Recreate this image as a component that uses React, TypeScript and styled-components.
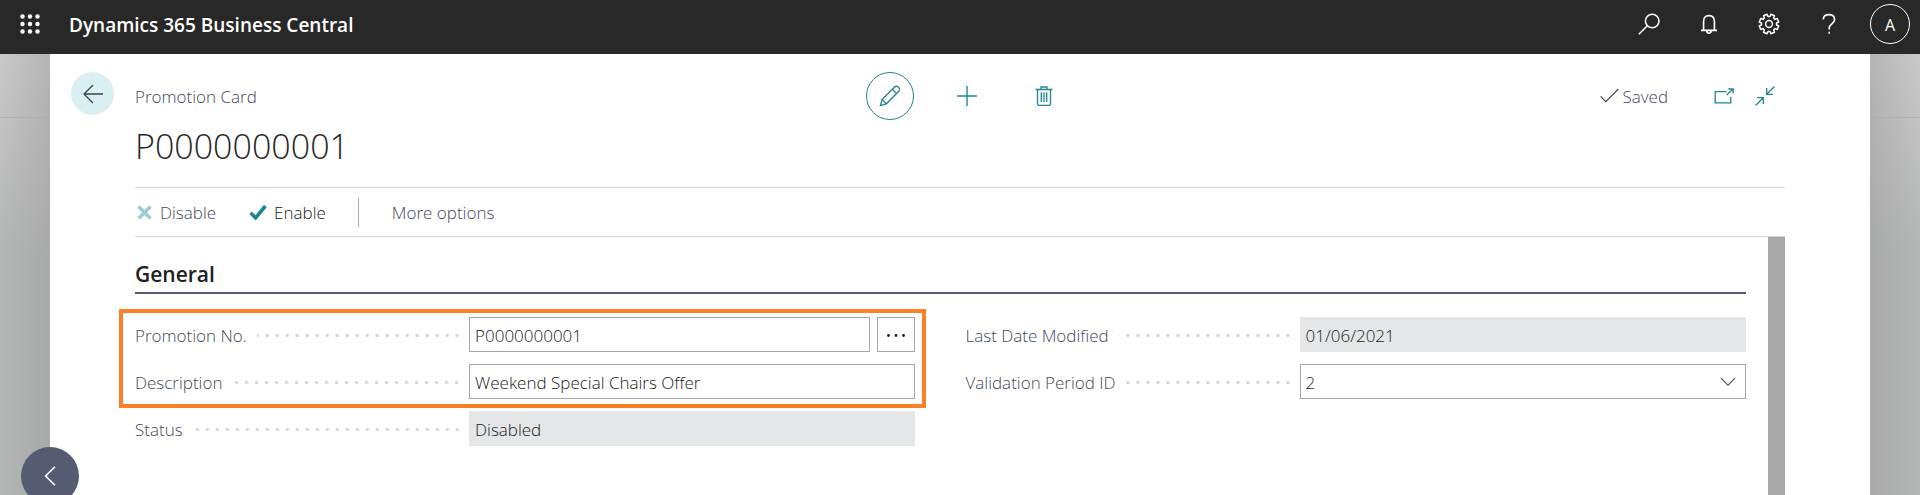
import React from "react";
import styled, { createGlobalStyle } from "styled-components";

const teal = "#1f868d";
const slate = "#535c70";
const ink = "#1a1a1a";
const mutedInk = "#3f4860";

const GlobalStyle = createGlobalStyle`
  *, *::before, *::after { box-sizing: border-box; }
  body { margin: 0; }
  body, button, input, select {
    font-family: "Open Sans", "Noto Sans", sans-serif;
    font-size: 17px;
    font-weight: 300;
  }
  h1, h2, p { margin: 0; }
`;

const Page = styled.div`
  display: flex;
  flex-direction: column;
  min-height: 100vh;
  overflow: hidden;
`;

const TopBar = styled.header`
  display: flex;
  align-items: center;
  height: 54px;
  padding: 0 10px 6px 14px;
  background: #282828;
  color: #fff;
`;

const IconButton = styled.button<{ $size?: number; $tone?: string }>`
  display: flex;
  flex: none;
  align-items: center;
  justify-content: center;
  width: ${(p) => p.$size ?? 48}px;
  height: ${(p) => p.$size ?? 48}px;
  padding: 0;
  border: 0;
  background: none;
  color: ${(p) => p.$tone ?? teal};
  cursor: pointer;
`;

const ProductName = styled.a`
  margin-left: 23px;
  padding-top: 2px;
  color: #fff;
  font-size: 19px;
  font-weight: 600;
  line-height: 26px;
  text-decoration: none;
`;

const TopActions = styled.nav`
  display: flex;
  align-items: center;
  gap: 28px;
  margin: 0 25px 0 auto;
`;

const Avatar = styled.button`
  width: 40px;
  height: 40px;
  padding: 2px 0 0;
  border: 1px solid #fff;
  border-radius: 50%;
  background: none;
  color: #fff;
  font-size: 16px;
  font-weight: 400;
`;

const Backdrop = styled.div`
  display: flex;
  flex: 1;
  padding: 0 50px;
  background:
    linear-gradient(#b0b0b0, #b0b0b0) 0 63px / 100% 1px no-repeat,
    linear-gradient(90deg, transparent, rgba(150, 150, 150, 0.4) 50px, rgba(150, 150, 150, 0.4) calc(100% - 50px), transparent),
    linear-gradient(#c9c9c9, #b4b6b5 45%, #b4b6b5);
`;

const Panel = styled.main`
  position: relative;
  display: grid;
  flex: 1;
  grid-template-columns: 64px minmax(0, 1fr);
  padding: 18px 85px 0 21px;
  background: #fff;
`;

const BackButton = styled(IconButton)`
  border-radius: 50%;
  background: #daeff2;
`;

const Content = styled.div`
  display: flex;
  flex-direction: column;
`;

const CardHeader = styled.div`
  display: grid;
  grid-template-columns: 1fr auto 1fr;
  align-items: center;
  height: 48px;
`;

const Caption = styled.p`
  padding-top: 2px;
  color: ${mutedInk};
  line-height: 24px;
`;

const CardActions = styled.div`
  display: flex;
  gap: 29px;
  padding-left: 14px;
`;

const EditButton = styled(IconButton)`
  border: 1px solid ${teal};
  border-radius: 50%;
`;

const CardStatus = styled.div`
  display: flex;
  align-items: center;
  justify-content: flex-end;
  gap: 10px;
  padding-right: 5px;
`;

const Saved = styled.span`
  display: flex;
  align-items: center;
  gap: 3px;
  margin-right: 30px;
  padding-top: 2px;
  color: ${mutedInk};
  line-height: 24px;

  svg { margin-bottom: 4px; }
`;

const CardTitle = styled.h1`
  padding-top: 1px;
  margin-bottom: 15px;
  color: #282828;
  font-size: 34px;
  font-weight: 300;
  line-height: 51px;
`;

const ActionBar = styled.div`
  display: flex;
  align-items: center;
  height: 50px;
  border-top: 1px solid #d3d4d8;
  border-bottom: 1px solid #d3d4d8;
`;

const Action = styled.button<{ $tone?: string }>`
  display: flex;
  align-items: center;
  gap: 7px;
  padding: 2px 0 0;
  border: 0;
  background: none;
  color: ${(p) => p.$tone ?? mutedInk};
  line-height: 24px;
`;

const EnableAction = styled(Action)`
  margin-left: 33px;
`;

const Divider = styled.span`
  width: 1px;
  height: 29px;
  margin: 0 33px 0 32px;
  background: #a9adb5;
`;

const ScrollArea = styled.div`
  display: flex;
  flex: 1;
`;

const General = styled.section`
  flex: 1;
  padding-right: 22px;
`;

const SectionTitle = styled.h2`
  margin-bottom: 23px;
  padding-top: 19px;
  border-bottom: 2px solid ${slate};
  color: #212121;
  font-size: 21px;
  font-weight: 600;
  line-height: 36px;
`;

const ScrollThumb = styled.div`
  width: 17px;
  background: #a9a9a9;
`;

const Columns = styled.div`
  display: grid;
  grid-template-columns: 1fr 1fr;
  gap: 50px;
`;

const FieldList = styled.div`
  display: flex;
  flex-direction: column;
  gap: 12px;
`;

const Highlighted = styled(FieldList)`
  position: relative;

  &::after {
    position: absolute;
    inset: -8px -10px -9px -16px;
    border: 4px solid #ff7f27;
    content: "";
    pointer-events: none;
  }
`;

const FieldRow = styled.div`
  display: grid;
  grid-template-columns: minmax(0, 428fr) minmax(0, 572fr);
`;

const FieldLabel = styled.label`
  display: flex;
  align-items: center;
  gap: 10px;
  padding: 2px 10px 0 0;
  color: ${mutedInk};
  white-space: nowrap;

  &::after {
    flex: 1;
    height: 3px;
    background: radial-gradient(circle at 8px 50%, #cfcfcf 1px, transparent 2px) right / 10px 3px repeat-x;
    content: "";
  }
`;

const FieldValue = styled.div`
  position: relative;
  display: flex;
  gap: 7px;
`;

const TextBox = styled.input`
  flex: 1;
  min-width: 0;
  height: 35px;
  padding: 2px 5px 0;
  border: 1px solid #a6a6a6;
  border-radius: 0;
  background: #fff;
  color: ${ink};

  &:read-only {
    border-color: #e5e6e8;
    background: #e5e6e8;
  }
`;

const DropDown = styled.select`
  flex: 1;
  height: 35px;
  padding: 2px 5px 0;
  border: 1px solid #a6a6a6;
  border-radius: 0;
  appearance: none;
  background: #fff;
  color: ${ink};
`;

const Chevron = styled.svg`
  position: absolute;
  top: 13px;
  right: 10px;
  pointer-events: none;
`;

const AssistButton = styled(IconButton)`
  width: 38px;
  height: 35px;
  border: 1px solid #a6a6a6;
`;

const PreviousButton = styled(IconButton)`
  position: absolute;
  top: 393px;
  left: -29px;
  border-radius: 50%;
  background: ${slate};
`;

const gearPath = (() => {
  const teeth = 8;
  const points: string[] = [];
  for (let i = 0; i < teeth; i++) {
    const mid = ((i + 0.5) * 360) / teeth;
    [[-15, 7.6], [-11, 9.9], [11, 9.9], [15, 7.6]].forEach(([turn, radius]) => {
      const angle = ((mid + turn) * Math.PI) / 180;
      points.push(`${(11 + radius * Math.cos(angle)).toFixed(2)} ${(11 + radius * Math.sin(angle)).toFixed(2)}`);
    });
  }
  return `M${points.join("L")}Z`;
})();

type IconProps = { w: number; h: number; stroke?: number; children: React.ReactNode };

const Icon = ({ w, h, stroke = 1, children }: IconProps) => (
  <svg width={w} height={h} viewBox={`0 0 ${w} ${h}`} fill="none" stroke="currentColor" strokeWidth={stroke} aria-hidden="true">
    {children}
  </svg>
);

export default function App() {
  return (
    <Page>
      <GlobalStyle />
      <TopBar>
        <IconButton $size={32} $tone="#fff" aria-label="App launcher">
          <Icon w={20} h={20}>
            <g fill="currentColor" stroke="none">
              {[2.5, 10, 17.5].map((y) => [2.5, 10, 17.5].map((x) => <circle key={`${x}-${y}`} cx={x} cy={y} r="2.2" />))}
            </g>
          </Icon>
        </IconButton>
        <ProductName href="#">Dynamics 365 Business Central</ProductName>
        <TopActions>
          <IconButton $size={32} $tone="#fff" aria-label="Search">
            <Icon w={22} h={22} stroke={1.5}>
              <circle cx="14.2" cy="8" r="6.8" />
              <path d="M9.4 12.8L.8 21.2" />
            </Icon>
          </IconButton>
          <IconButton $size={32} $tone="#fff" aria-label="Notifications">
            <Icon w={18} h={20} stroke={1.6}>
              <path d="M3.6 16V7.4C3.6 3.6 5.8 1.6 9 1.6s5.4 2 5.4 5.8V16M1 16.4h16M6.8 17a2.2 2.2 0 0 0 4.4 0" />
            </Icon>
          </IconButton>
          <IconButton $size={32} $tone="#fff" aria-label="Settings">
            <Icon w={22} h={22} stroke={1.5}>
              <path d={gearPath} strokeLinejoin="round" />
              <circle cx="11" cy="11" r="3.4" />
            </Icon>
          </IconButton>
          <IconButton $size={32} $tone="#fff" aria-label="Help">
            <Icon w={14} h={22} stroke={1.6}>
              <path d="M1.3 6.6C1.3 3.3 3.6 1.6 7 1.6s5.6 1.9 5.6 4.9c0 4.3-5.4 4.4-5.4 8.6V16.6" />
              <path d="M7.2 18.8v2" />
            </Icon>
          </IconButton>
        </TopActions>
        <Avatar aria-label="Account">A</Avatar>
      </TopBar>
      <Backdrop>
        <Panel>
          <BackButton $size={43} $tone="#404040" aria-label="Back">
            <Icon w={20} h={20} stroke={1.3}>
              <path d="M20 10H1M10 1L1 10l9 9" />
            </Icon>
          </BackButton>
          <Content>
            <CardHeader>
              <Caption>Promotion Card</Caption>
              <CardActions>
                <EditButton aria-label="Edit">
                  <Icon w={22} h={22} stroke={1.3}>
                    <path d="M1.5 20.5l1.6-5.9L15.3 2.3a2.9 2.9 0 0 1 4.3 4.2L7.3 18.8zM13.3 4.3l4.3 4.3M3.1 14.6l4.2 4.2" />
                  </Icon>
                </EditButton>
                <IconButton aria-label="New">
                  <Icon w={20} h={20} stroke={1.4}>
                    <path d="M10 0v20M0 10h20" />
                  </Icon>
                </IconButton>
                <IconButton aria-label="Delete">
                  <Icon w={18} h={20} stroke={1.3}>
                    <path d="M.5 3.5h17M6 3.2V1h6v2.2M2.5 3.5v14.2q0 1.7 1.7 1.7h9.6q1.7 0 1.7-1.7V3.5M6.3 6.3v9.8M9 6.3v9.8M11.7 6.3v9.8" />
                  </Icon>
                </IconButton>
              </CardActions>
              <CardStatus>
                <Saved>
                  <Icon w={19} h={15} stroke={1.2}>
                    <path d="M.6 8.4l5.2 5.2L18.3 1" />
                  </Icon>
                  Saved
                </Saved>
                <IconButton $size={31} aria-label="Open in new window">
                  <Icon w={20} h={16} stroke={1.3}>
                    <path d="M12.5 3.7H1.2v11.1h15.6V8.8M12.6 7l6.2-5.8M14.4 1h4.8v4.6" />
                  </Icon>
                </IconButton>
                <IconButton $size={31} aria-label="Collapse">
                  <Icon w={20} h={20} stroke={1.3}>
                    <path d="M.5 19.5L8.3 11.7M2 11.7h6.3V18M19.5.5l-7.8 7.8M11.7 2v6.3H18" />
                  </Icon>
                </IconButton>
              </CardStatus>
            </CardHeader>
            <CardTitle>P0000000001</CardTitle>
            <ActionBar>
              <Action>
                <Icon w={18} h={18} stroke={3.6}>
                  <path d="M3.6 2.4l12 12M15.6 2.4l-12 12" stroke="#9fccd1" />
                </Icon>
                Disable
              </Action>
              <EnableAction $tone={ink}>
                <Icon w={18} h={18} stroke={3.6}>
                  <path d="M1.6 8.8l5 5L16.4 2" stroke={teal} />
                </Icon>
                Enable
              </EnableAction>
              <Divider />
              <Action>More options</Action>
            </ActionBar>
            <ScrollArea>
              <General>
                <SectionTitle>General</SectionTitle>
                <Columns>
                  <FieldList>
                    <Highlighted>
                      <FieldRow>
                        <FieldLabel htmlFor="promotion-no">Promotion No.</FieldLabel>
                        <FieldValue>
                          <TextBox id="promotion-no" defaultValue="P0000000001" />
                          <AssistButton $tone="#212121" aria-label="Choose a number">
                            <Icon w={20} h={4}>
                              <g fill="currentColor" stroke="none">
                                <circle cx="2.5" cy="2.5" r="1.4" />
                                <circle cx="10" cy="2.5" r="1.4" />
                                <circle cx="17.5" cy="2.5" r="1.4" />
                              </g>
                            </Icon>
                          </AssistButton>
                        </FieldValue>
                      </FieldRow>
                      <FieldRow>
                        <FieldLabel htmlFor="description">Description</FieldLabel>
                        <FieldValue>
                          <TextBox id="description" defaultValue="Weekend Special Chairs Offer" />
                        </FieldValue>
                      </FieldRow>
                    </Highlighted>
                    <FieldRow>
                      <FieldLabel htmlFor="status">Status</FieldLabel>
                      <FieldValue>
                        <TextBox id="status" readOnly value="Disabled" />
                      </FieldValue>
                    </FieldRow>
                  </FieldList>
                  <FieldList>
                    <FieldRow>
                      <FieldLabel htmlFor="last-modified">Last Date Modified</FieldLabel>
                      <FieldValue>
                        <TextBox id="last-modified" readOnly value="01/06/2021" />
                      </FieldValue>
                    </FieldRow>
                    <FieldRow>
                      <FieldLabel htmlFor="validation-period">Validation Period ID</FieldLabel>
                      <FieldValue>
                        <DropDown id="validation-period" defaultValue="2">
                          <option>2</option>
                        </DropDown>
                        <Chevron width="16" height="10" viewBox="0 0 16 10" fill="none" stroke="#505050" strokeWidth="1.2" aria-hidden="true">
                          <path d="M1 1.2l7 7 7-7" />
                        </Chevron>
                      </FieldValue>
                    </FieldRow>
                  </FieldList>
                </Columns>
              </General>
              <ScrollThumb />
            </ScrollArea>
          </Content>
          <PreviousButton $size={58} $tone="#fff" aria-label="Previous">
            <Icon w={12} h={20} stroke={1.6}>
              <path d="M11 .8L1.6 10l9.4 9.2" />
            </Icon>
          </PreviousButton>
        </Panel>
      </Backdrop>
    </Page>
  );
}
